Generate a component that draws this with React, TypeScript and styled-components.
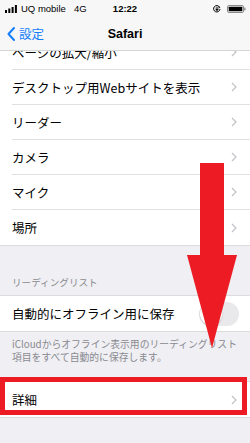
import React from 'react'
import styled, { createGlobalStyle } from 'styled-components'

const GlobalStyle = createGlobalStyle`
	html, body {
		margin: 0;
		padding: 0;
		background: #efeff4;
	}
	body {
		font-family: "Noto Sans CJK JP", "Noto Sans", sans-serif;
	}
`

const Screen = styled.div`
	position: relative;
	width: 250px;
	height: 443px;
	overflow: hidden;
	background: #efeff4;
	display: flex;
	flex-direction: column;
`

const StatusBar = styled.div`
	height: 17px;
	display: flex;
	align-items: center;
	padding: 0 4px 0 5px;
	background: #f7f7f7;
	font-family: "Liberation Sans", Arial, sans-serif;
	font-size: 9.5px;
	color: #000;

	.carrier {
		margin-left: 4px;
	}
	.net {
		margin-left: 8px;
	}
	.time {
		position: absolute;
		left: 0;
		right: 0;
		text-align: center;
		font-weight: bold;
		pointer-events: none;
	}
	.right {
		margin-left: auto;
		display: flex;
		align-items: center;
		gap: 6px;
	}
`

const NavBar = styled.div`
	height: 33px;
	display: flex;
	align-items: center;
	position: relative;
	background: #f7f7f7;
	border-bottom: 1px solid #d6d6d6;
	z-index: 2;
`

const BackButton = styled.div`
	display: flex;
	align-items: center;
	gap: 4px;
	padding-left: 7px;
	color: #157efb;
	font-size: 12.5px;
`

const Title = styled.div`
	position: absolute;
	left: 0;
	right: 0;
	text-align: center;
	font-family: "Liberation Sans", Arial, sans-serif;
	font-weight: bold;
	font-size: 12.5px;
	color: #000;
	pointer-events: none;
`

const Scroll = styled.div`
	flex: 1;
	overflow: hidden;
`

const Content = styled.div`
	margin-top: -17px;
`

const Group = styled.div`
	background: #fff;
	border-top: 1px solid #dcdcdc;
	border-bottom: 1px solid #dcdcdc;
`

const Row = styled.div<{ $last?: boolean }>`
	height: 35px;
	margin-left: 12px;
	padding-right: 13px;
	display: flex;
	align-items: center;
	justify-content: space-between;
	font-size: 12.5px;
	color: #000;
	box-sizing: border-box;
	border-bottom: ${(p) => (p.$last ? 'none' : '1px solid #e0e0e0')};
`

const Chevron = styled.svg`
	width: 6px;
	height: 10px;
	flex-shrink: 0;
`

const SectionHeader = styled.div`
	height: 49px;
	display: flex;
	align-items: flex-end;
	padding: 0 12px 6px;
	box-sizing: border-box;
	font-size: 9.6px;
	color: #8a8a8f;
`

const SectionFooter = styled.div`
	padding: 6px 12px 0;
	height: 49px;
	box-sizing: border-box;
	font-size: 9.8px;
	line-height: 12.5px;
	color: #8a8a8f;
`

const Toggle = styled.div`
	width: 40px;
	height: 24px;
	margin-right: -2px;
	border-radius: 12px;
	background: #e9e9eb;
	position: relative;

	&::after {
		content: '';
		position: absolute;
		left: 1px;
		top: 1px;
		width: 22px;
		height: 22px;
		border-radius: 50%;
		background: #fff;
		box-shadow: 0 1px 2px rgba(0, 0, 0, 0.2);
	}
`

const Highlight = styled.div`
	position: absolute;
	left: 0;
	top: 377px;
	width: 247px;
	height: 38px;
	border: 5px solid #ed1c24;
	box-sizing: border-box;
	z-index: 3;
`

const Arrow = styled.svg`
	position: absolute;
	left: 0;
	top: 0;
	z-index: 3;
	pointer-events: none;
`

function ChevronIcon() {
	return (
		<Chevron viewBox="0 0 6 10">
			<path d="M1 1 L5 5 L1 9" fill="none" stroke="#c4c4c9" strokeWidth="1.3" />
		</Chevron>
	)
}

const items = ['ページの拡大/縮小', 'デスクトップ用Webサイトを表示', 'リーダー', 'カメラ', 'マイク', '場所']

export default function App() {
	return (
		<Screen>
			<GlobalStyle />
			<StatusBar>
				<svg width="12" height="8" viewBox="0 0 12 8">
					<rect x="0" y="5" width="2" height="3" fill="#000" />
					<rect x="3.3" y="3.5" width="2" height="4.5" fill="#000" />
					<rect x="6.6" y="2" width="2" height="6" fill="#000" />
					<rect x="9.9" y="0" width="2" height="8" fill="#000" />
				</svg>
				<span className="carrier">UQ mobile</span>
				<span className="net">4G</span>
				<span className="time">12:22</span>
				<div className="right">
					<svg width="8" height="8" viewBox="0 0 8 8">
						<path d="M6.6 2.2 A3.2 3.2 0 1 0 7 4" fill="none" stroke="#000" strokeWidth="1" />
						<path d="M5.6 1.2 L7.2 2.4 L5.8 3.4 Z" fill="#000" />
						<rect x="2.7" y="3.6" width="2.6" height="2" fill="#000" />
						<path d="M3.1 3.6 V2.9 A0.9 0.9 0 0 1 4.9 2.9 V3.6" fill="none" stroke="#000" strokeWidth="0.6" />
					</svg>
					<svg width="19" height="8" viewBox="0 0 19 8">
						<rect x="0.5" y="0.5" width="16" height="7" rx="1.5" fill="none" stroke="#8a8a8a" strokeWidth="1" />
						<rect x="1.7" y="1.7" width="13.6" height="4.6" rx="0.6" fill="#000" />
						<rect x="17.2" y="2.6" width="1.3" height="2.8" rx="0.5" fill="#8a8a8a" />
					</svg>
				</div>
			</StatusBar>
			<NavBar>
				<BackButton>
					<svg width="8" height="14" viewBox="0 0 8 14">
						<path d="M7 1 L1.5 7 L7 13" fill="none" stroke="#157efb" strokeWidth="2" strokeLinecap="round" strokeLinejoin="round" />
					</svg>
					<span>設定</span>
				</BackButton>
				<Title>Safari</Title>
			</NavBar>
			<Scroll>
				<Content>
					<Group>
						{items.map((label, i) => (
							<Row key={label} $last={i === items.length - 1}>
								<span>{label}</span>
								<ChevronIcon />
							</Row>
						))}
					</Group>
					<SectionHeader>リーディングリスト</SectionHeader>
					<Group>
						<Row $last>
							<span>自動的にオフライン用に保存</span>
							<Toggle />
						</Row>
					</Group>
					<SectionFooter>
						iCloudからオフライン表示用のリーディングリスト
						<br />
						項目をすべて自動的に保存します。
					</SectionFooter>
					<Group>
						<Row $last>
							<span>詳細</span>
							<ChevronIcon />
						</Row>
					</Group>
				</Content>
			</Scroll>
			<Highlight />
			<Arrow width="250" height="443" viewBox="0 0 250 443">
				<rect x="200" y="163" width="24" height="93" fill="#ed1c24" />
				<polygon points="187,255 237,255 212,348" fill="#ed1c24" />
			</Arrow>
		</Screen>
	)
}
